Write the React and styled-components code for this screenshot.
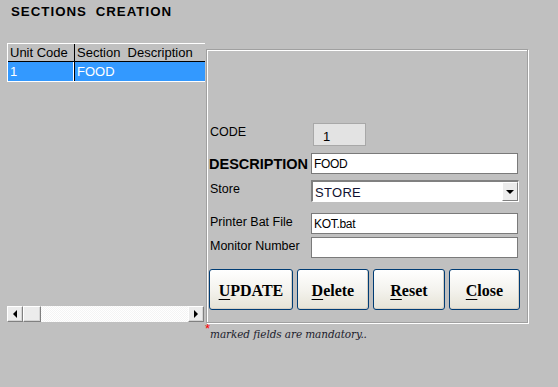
import React from 'react'
import styled, { createGlobalStyle } from 'styled-components'

const GlobalStyle = createGlobalStyle`
	html, body {
		margin: 0;
		padding: 0;
		background: #c0c0c0;
	}
	body {
		font-family: "Liberation Sans", Arial, sans-serif;
		font-size: 12px;
		color: #000;
	}
`

const Screen = styled.div`
	width: 558px;
	height: 387px;
	background: #c0c0c0;
	overflow: hidden;
`

const Title = styled.h1`
	margin: 0;
	padding: 4px 0 0 11px;
	height: 43px;
	box-sizing: border-box;
	font-size: 13.3px;
	font-weight: 700;
	letter-spacing: 1px;
	word-spacing: 4px;
	line-height: 15px;
`

const Body = styled.div`
	display: flex;
	align-items: flex-start;
	padding-left: 7px;
`

const LeftColumn = styled.div`
	width: 198px;
	height: 279px;
	display: flex;
	flex-direction: column;
	justify-content: space-between;
	margin-right: 1px;
`

const Grid = styled.div`
	border-top: 1px solid #fff;
	border-left: 1px solid #fff;
	border-bottom: 1px solid #fff;
`

const GridRow = styled.div`
	display: flex;
	height: ${p => (p.$header ? 17 : 19)}px;
	background: ${p => (p.$selected ? '#3399ff' : '#c0c0c0')};
	color: ${p => (p.$selected ? '#fff' : '#000')};
	border-bottom: ${p => (p.$header ? '1px solid #000' : 'none')};
`

const Cell = styled.div`
	width: ${p => p.$width}px;
	flex: ${p => (p.$grow ? 1 : 'none')};
	padding-left: 2px;
	line-height: ${p => (p.$header ? 17 : 19)}px;
	white-space: nowrap;
	overflow: hidden;
	border-right: ${p => (p.$divider ? '1px solid #000' : 'none')};
	box-shadow: ${p => (p.$divider && p.$selected ? 'inset -1px 0 0 #fff' : 'none')};
	font-size: 13px;
`

const ScrollBar = styled.div`
	display: flex;
	height: 16px;
	width: 197px;
	background-color: #fff;
	background-image: repeating-conic-gradient(#f4f4f4 0 25%, #fff 0 50%);
	background-size: 2px 2px;
`

const ScrollButton = styled.div`
	width: ${p => p.$width || 16}px;
	height: 16px;
	box-sizing: border-box;
	background: #ececec;
	border-top: 1px solid #fff;
	border-left: 1px solid #fff;
	border-right: 1px solid #808080;
	border-bottom: 1px solid #808080;
	box-shadow: inset -1px -1px 0 #d4d4d4;
	display: flex;
	align-items: center;
	justify-content: center;
	margin-left: ${p => (p.$right ? 'auto' : 0)};
`

const Arrow = styled.span`
	width: 0;
	height: 0;
	border-top: 4px solid transparent;
	border-bottom: 4px solid transparent;
	${p => (p.$dir === 'left' ? 'border-right: 4px solid #000;' : 'border-left: 4px solid #000;')}
`

const Panel = styled.div`
	margin-top: 6px;
	width: 322px;
	height: 274px;
	box-sizing: border-box;
	border: 1px solid #a0a0a0;
	box-shadow: inset 1px 1px 0 #fff, 1px 1px 0 #fff;
	padding: 73px 7px 0 3px;
	display: flex;
	flex-direction: column;
`

const FieldRow = styled.div`
	display: flex;
	align-items: center;
	height: ${p => p.$height}px;
	margin-top: ${p => p.$gap || 0}px;
`

const Label = styled.label`
	width: ${p => (p.$bold ? 100 : 101)}px;
	margin-left: ${p => (p.$bold ? -1 : 0)}px;
	margin-right: ${p => (p.$bold ? 2 : 0)}px;
	flex: none;
	font-size: ${p => (p.$bold ? 14.5 : 12.5)}px;
	font-weight: ${p => (p.$bold ? 700 : 400)};
	position: relative;
	top: ${p => p.$shift || 0}px;
	white-space: nowrap;
`

const CodeBox = styled.div`
	margin-left: 2px;
	width: 53px;
	height: 23px;
	box-sizing: border-box;
	background: #e3e3e3;
	border: 1px solid #a8a8a8;
	padding: 5px 0 0 9px;
	font-size: 13px;
`

const TextInput = styled.div`
	width: 207px;
	height: 21px;
	box-sizing: border-box;
	background: #fff;
	border: 1px solid #7a7a7a;
	padding: 2px 0 0 2px;
	font-size: 12px;
	letter-spacing: -0.3px;
	line-height: 16px;
`

const Select = styled.div`
	width: 208px;
	height: 22px;
	box-sizing: border-box;
	background: #fff;
	border-top: 2px solid #808080;
	border-left: 2px solid #808080;
	border-right: 1px solid #fff;
	border-bottom: 1px solid #fff;
	display: flex;
	align-items: stretch;
`

const SelectText = styled.div`
	flex: 1;
	padding: 3px 0 0 2px;
	font-size: 13px;
	color: #101030;
	letter-spacing: 0.3px;
`

const SelectButton = styled.div`
	width: 16px;
	box-sizing: border-box;
	background: #ececec;
	border-top: 1px solid #fff;
	border-left: 1px solid #fff;
	border-right: 1px solid #808080;
	border-bottom: 1px solid #808080;
	display: flex;
	align-items: center;
	justify-content: center;
`

const DownArrow = styled.span`
	width: 0;
	height: 0;
	border-left: 4px solid transparent;
	border-right: 4px solid transparent;
	border-top: 4px solid #000;
	margin-top: 1px;
`

const ButtonBar = styled.div`
	display: flex;
	gap: 4px;
	margin-top: 11px;
	margin-left: -1px;
`

const Button = styled.button`
	width: ${p => p.$width}px;
	height: 41px;
	box-sizing: border-box;
	border: 1px solid #003c74;
	border-radius: 3px;
	background: linear-gradient(#ffffff 0%, #f4f3ee 50%, #e6e3d6 100%);
	box-shadow: inset -1px -1px 0 #d6d0c5;
	font-family: "Liberation Serif", "Times New Roman", serif;
	font-weight: 700;
	font-size: 16px;
	color: #000;
	padding: 2px 0 0;
	cursor: pointer;

	u {
		text-decoration-thickness: 1px;
		text-underline-offset: 3px;
	}
`

const Note = styled.div`
	padding-left: 205px;
	font-family: "DejaVu Serif", "Liberation Serif", serif;
	font-style: italic;
	font-size: 10.5px;
	color: #1c1c2c;
	display: flex;
	align-items: flex-start;
`

const Star = styled.span`
	color: #ff0000;
	font-style: normal;
	font-family: "Liberation Sans", Arial, sans-serif;
	font-size: 13px;
	line-height: 10px;
	margin-top: 1px;
`

const NoteText = styled.span`
	margin-top: 5px;
	letter-spacing: -0.1px;
`

const buttons = [
	{ key: 'U', rest: 'PDATE', width: 85 },
	{ key: 'D', rest: 'elete', width: 73 },
	{ key: 'R', rest: 'eset', width: 73 },
	{ key: 'C', rest: 'lose', width: 72 }
]

export default function App() {
	return (
		<Screen>
			<GlobalStyle />
			<Title>SECTIONS CREATION</Title>
			<Body>
				<LeftColumn>
					<Grid>
						<GridRow $header>
							<Cell $header $divider $width={64}>Unit Code</Cell>
							<Cell $header $grow>Section&nbsp; Description</Cell>
						</GridRow>
						<GridRow $selected>
							<Cell $selected $divider $width={64}>1</Cell>
							<Cell $selected $grow>FOOD</Cell>
						</GridRow>
					</Grid>
					<ScrollBar>
						<ScrollButton>
							<Arrow $dir="left" />
						</ScrollButton>
						<ScrollButton $width={18} />
						<ScrollButton $right>
							<Arrow $dir="right" />
						</ScrollButton>
					</ScrollBar>
				</LeftColumn>
				<Panel>
					<FieldRow $height={23}>
						<Label $shift={-3}>CODE</Label>
						<CodeBox>1</CodeBox>
					</FieldRow>
					<FieldRow $height={21} $gap={7}>
						<Label $bold>DESCRIPTION</Label>
						<TextInput>FOOD</TextInput>
					</FieldRow>
					<FieldRow $height={22} $gap={6}>
						<Label $shift={-2}>Store</Label>
						<Select>
							<SelectText>STORE</SelectText>
							<SelectButton>
								<DownArrow />
							</SelectButton>
						</Select>
					</FieldRow>
					<FieldRow $height={21} $gap={11}>
						<Label $shift={-2}>Printer Bat File</Label>
						<TextInput>KOT.bat</TextInput>
					</FieldRow>
					<FieldRow $height={21} $gap={3}>
						<Label $shift={-2}>Monitor Number</Label>
						<TextInput />
					</FieldRow>
					<ButtonBar>
						{buttons.map(b => (
							<Button key={b.key} $width={b.width}>
								<u>{b.key}</u>
								{b.rest}
							</Button>
						))}
					</ButtonBar>
				</Panel>
			</Body>
			<Note>
				<Star>*</Star>
				<NoteText>marked fields are mandatory..</NoteText>
			</Note>
		</Screen>
	)
}
